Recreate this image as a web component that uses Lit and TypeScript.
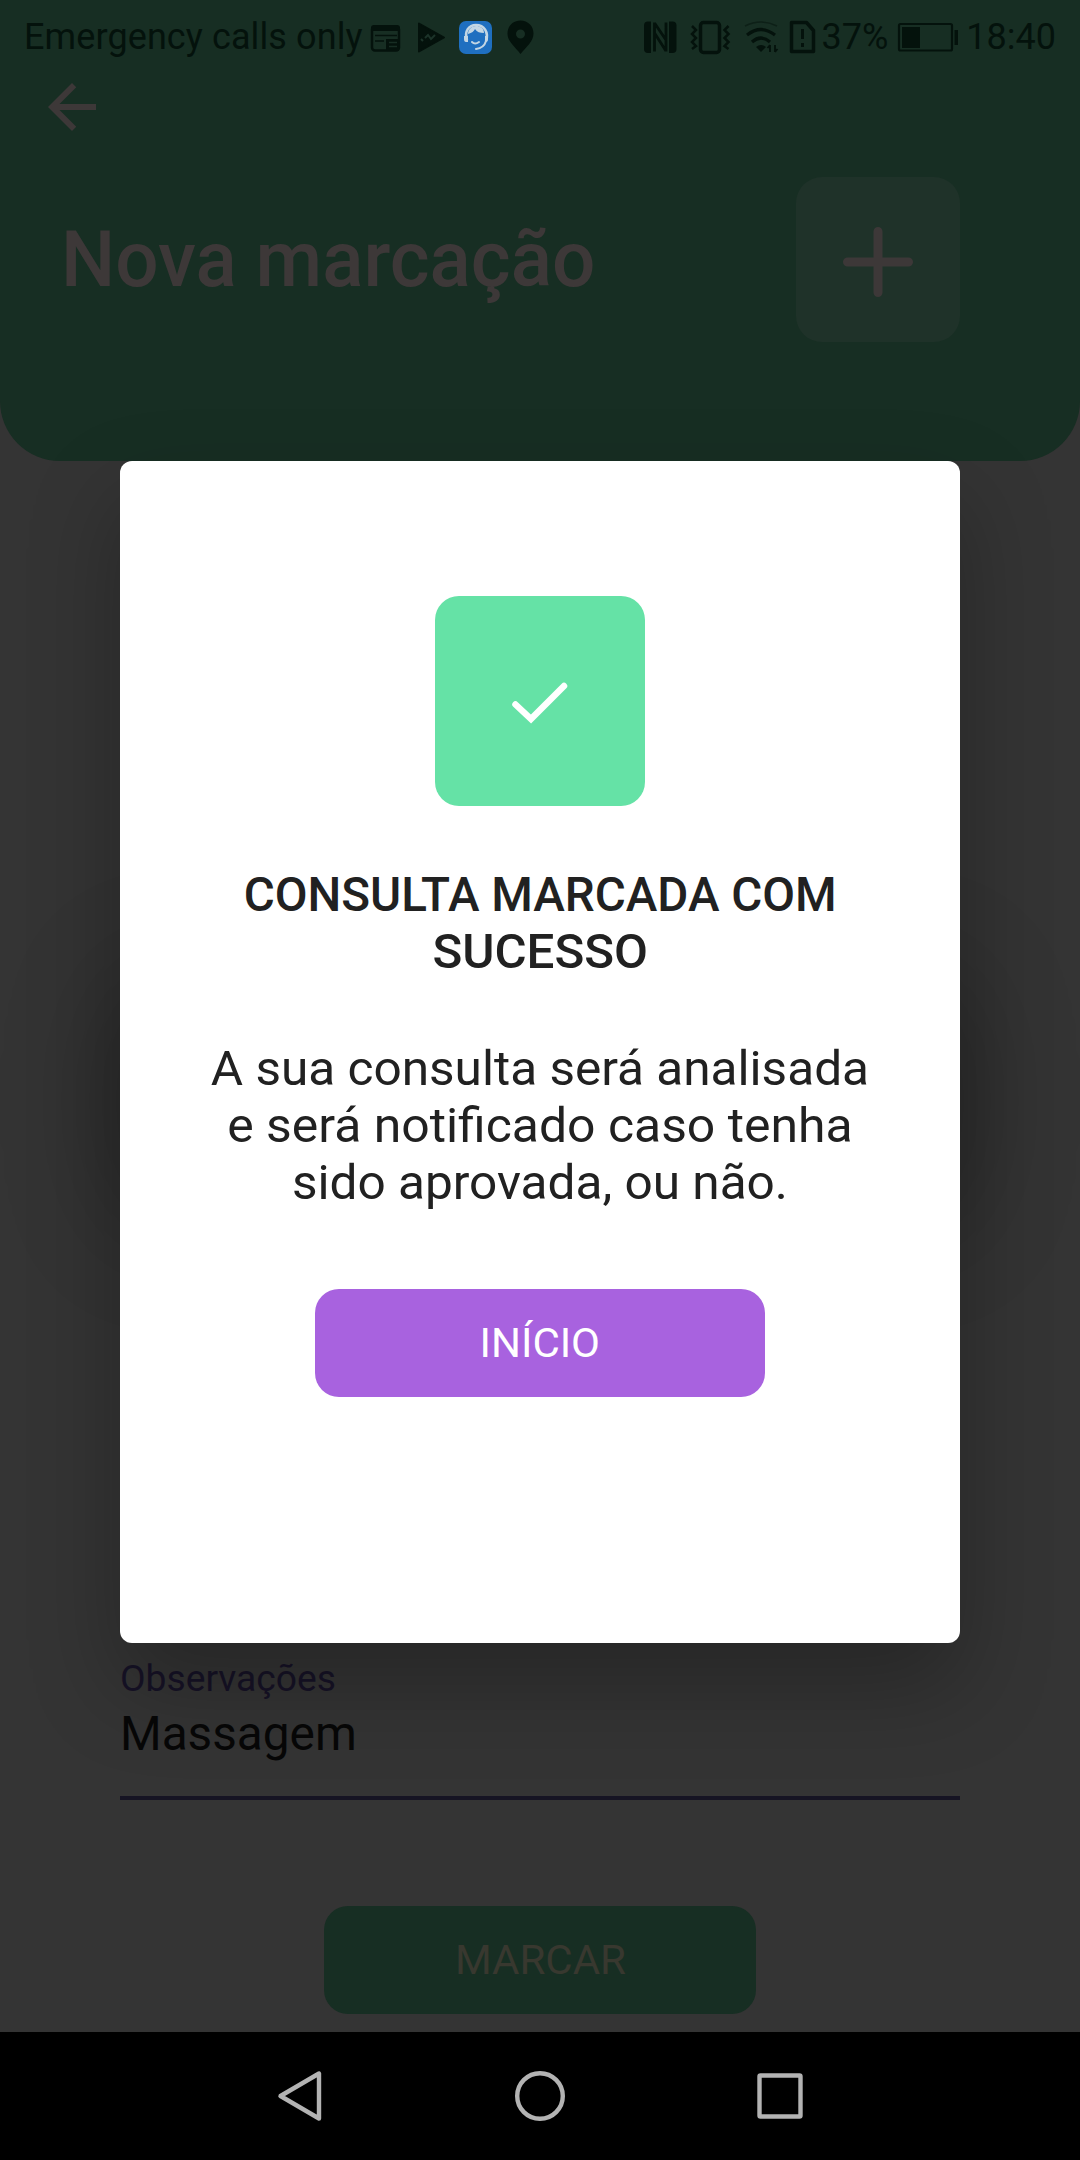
import { LitElement, html, css, svg } from "lit";
import { customElement } from "lit/decorators.js";

@customElement("status-bar")
class StatusBar extends LitElement {
  static styles = css`
    :host { display: flex; justify-content: space-between; align-items: center; height: 74px; padding: 0 24px 0 24px; box-sizing: border-box; font: 36px/42px Roboto, sans-serif; color: #04120c; }
    .side { display: flex; align-items: center; }
    .carrier, .pct, .clock { display: block; white-space: nowrap; }
    .carrier { letter-spacing: 0.1px; }
    .pct { margin-right: 2px; }
    svg { display: block; flex: none; }
  `;
  render() {
    return html`
      <div class="side">
        <span class="carrier">Emergency calls only</span>
        <svg class="tray" width="180" height="40" viewBox="363 16 180 40" fill="none">
          <rect x="372" y="25.500" width="27" height="24" rx="3" stroke="#04120c" stroke-width="2.500"/>
          <path d="M371 27q0-3 3-3h23q3 0 3 3v3h-29z" fill="#04120c"/>
          <path d="M375 34.500h22M375 40h9" stroke="#04120c" stroke-width="1.400"/>
          <path d="M386 38h13v12h-13z" fill="#04120c"/>
          <path d="M389 41.500h8M389 45.500h8" stroke="#172d23" stroke-width="1.400"/>
          <path d="M419 22.500l25 14-25 14z" fill="#04120c" stroke="#04120c" stroke-width="2" stroke-linejoin="round"/>
          <path d="M421 38l2 2M425 37l3-3 3 4 4-4" stroke="#1c3329" stroke-width="2"/>
          <rect x="459" y="20" width="33" height="33" rx="7" fill="#1f6fc0"/>
          <path d="M467 39c-3-9 2-15 9-15 8 0 13 7 10 16" stroke="#c3d6e4" stroke-width="2.600"/>
          <path d="M468 33c4-1 6-3 7-5 2 3 5 4 9 4 0-5-4-7-8-7s-8 3-8 8z" fill="#c3d6e4"/>
          <path d="M464 35h4v6h-2q-2 0-2-3zM485 35h3v3q0 3-3 3z" fill="#c3d6e4"/>
          <path d="M486 40q-2 7-10 8M472 41q3 3 7 0" stroke="#c3d6e4" stroke-width="2" stroke-linecap="round"/>
          <path fill-rule="evenodd" d="M520.500 19.500c-7.500 0-13 5.500-13 13 0 8 7 13 13 20.500 6-7.500 13-12.500 13-20.500 0-7.500-5.500-13-13-13zm0 9a4.500 4.500 0 1 1 0 9 4.500 4.500 0 0 1 0-9z" fill="#04120c"/>
        </svg>
      </div>
      <div class="side">
        <svg width="180" height="40" viewBox="640 16 180 40" fill="none" stroke="#04120c">
          <path d="M646 20.500h3v31.500h-3q-4 0-4-4v-23.500q0-4 4-4zM667 20.500h3.500q4 0 4 4v23.500q0 4-4 4h-3.500z" fill="#04120c" stroke="none"/>
          <path d="M652.500 21.500v29M664 21.500v29M652.500 22l11.500 17M652.500 32l11.500 18" stroke-width="2.800"/>
          <rect x="698.500" y="21.500" width="19" height="30" rx="3" stroke-width="3.500"/>
          <path d="M690 25l4 4-4 4 4 4-4 4 4 4-4 3M726.500 25l-4 4 4 4-4 4 4 4-4 4 4 3" stroke-width="2.500"/>
          <path d="M743 25q16-8 32 0" stroke-width="1.500" opacity=".5"/>
          <path d="M745 34q14-11 28 0M750 41q9-8 18 0" stroke-width="3.200"/>
          <path d="M754 46q5-4 10 0l-5 5z" fill="#04120c" stroke="none"/>
          <path d="M768 44v7M773 44v7M765.500 47l2.500-3M773 51l2.500-3" stroke-width="1.800"/>
          <path d="M789.500 21.500h15l7 8v21h-22z" stroke-width="3.500" stroke-linejoin="round"/>
          <path d="M800.500 28v10M800.500 42v4" stroke-width="3"/>
        </svg>
        <span class="pct">37%</span>
        <svg width="76" height="40" viewBox="888 16 76 40" fill="none">
          <rect x="897" y="23" width="53" height="26.500" rx="1.500" stroke="#04120c" stroke-width="2.200"/>
          <path d="M900 26h18v21h-18zM952.500 29h3.500v15h-3.500z" fill="#04120c"/>
        </svg>
        <span class="clock">18:40</span>
      </div>`;
  }
}

@customElement("nav-bar")
class NavBar extends LitElement {
  static styles = css`
    :host { display: flex; justify-content: center; align-items: center; gap: 180px; height: 128px; background: #000; }
    svg { display: block; }
  `;
  render() {
    const wrap = (shape: unknown) => html`<svg width="60" height="60" viewBox="0 0 60 60" fill="none" stroke="#b3b3b3" stroke-width="4.400" stroke-linejoin="round">${shape}</svg>`;
    return html`
      ${wrap(svg`<path d="M49 7.500v45L10.500 30z"/>`)}
      ${wrap(svg`<circle cx="30" cy="30" r="22.800"/>`)}
      ${wrap(svg`<rect x="9.500" y="9.500" width="41" height="41" rx="1"/>`)}`;
  }
}

@customElement("success-dialog")
class SuccessDialog extends LitElement {
  static styles = css`
    :host { display: block; width: 840px; height: 1182px; border-radius: 12px; box-shadow: 0 42px 90px rgba(0,0,0,.27); }
    .glow { position: absolute; left: 10px; right: 10px; top: 530px; height: 220px; border-radius: 40px; box-shadow: 0 0 110px 16px rgba(0,0,0,.27); }
    .card { position: relative; display: flex; flex-direction: column; align-items: center; height: 1182px; box-sizing: border-box; padding-top: 135px; border-radius: 12px; background: #fff; color: #212121; font: 48px/57px Roboto, sans-serif; text-align: center; }
    .tile { width: 210px; height: 210px; border-radius: 24px; background: #65e2a6; }
    .title { margin-top: 60px; font-weight: 500; }
    .message { margin-top: 60px; }
    .line { display: block; white-space: nowrap; }
    .title .line:first-child { transform: scaleX(.991); }
    .title .line:last-child { transform: scaleX(1.026); }
    .message .line { transform: scaleX(1.032); }
    .message .line:nth-child(2) { transform: scaleX(1.039); }
    .action { display: flex; align-items: center; justify-content: center; width: 450px; height: 108px; margin-top: 78px; border-radius: 24px; background: #a862df; color: #fff; font-size: 41px; }
    .action span { transform: scaleX(1.024); }
    svg { display: block; }
  `;
  render() {
    return html`
      <div class="glow"></div>
      <div class="card">
        <div class="tile">
          <svg width="210" height="210" viewBox="0 0 210 210" fill="none" stroke="#fff" stroke-width="6.500" stroke-linecap="round" stroke-linejoin="miter"><path d="M80.500 108.500l15.500 14.500 33-33"/></svg>
        </div>
        <div class="title"><span class="line">CONSULTA MARCADA COM</span><span class="line">SUCESSO</span></div>
        <div class="message"><span class="line">A sua consulta será analisada</span><span class="line">e será notificado caso tenha</span><span class="line">sido aprovada, ou não.</span></div>
        <div class="action"><span>INÍCIO</span></div>
      </div>`;
  }
}

@customElement("app-root")
class AppRoot extends LitElement {
  static styles = css`
    :host { display: block; width: 1080px; height: 2160px; font-family: Roboto, sans-serif; }
    .screen { position: relative; display: flex; flex-direction: column; height: 2160px; overflow: hidden; background: #343434; }
    .header { height: 461px; box-sizing: border-box; border-radius: 0 0 60px 60px; background: #172e23; }
    .back { display: block; margin: -3px 0 0 36px; }
    .hero { display: flex; justify-content: space-between; align-items: center; padding: 34px 120px 0 61px; }
    .heading { font-size: 78px; line-height: 92px; font-weight: 500; color: #3d3838; white-space: nowrap; transform: scaleX(.98); transform-origin: left; }
    .add { width: 164px; height: 165px; border-radius: 26px; background: #1f3229; }
    .add svg { display: block; }
    .form { flex: 1; display: flex; flex-direction: column; justify-content: flex-end; align-items: center; padding: 0 120px 18px; }
    .field { width: 840px; height: 138px; border-bottom: 4px solid #161423; }
    .label { display: block; font-size: 36px; line-height: 42px; color: #161226; transform: scaleX(1.033); transform-origin: left; }
    .value { display: block; margin: 5px 0 0; font-size: 48px; line-height: 57px; color: #070707; transform: scaleX(.994); transform-origin: left; }
    .submit { display: flex; align-items: center; justify-content: center; width: 432px; height: 108px; margin-top: 106px; border-radius: 24px; background: #172e23; color: #38382f; font-size: 41px; }
    .submit span { transform: scaleX(1.025); }
    .dialog { position: absolute; left: 120px; top: 461px; }
    nav-bar { position: relative; }
  `;
  render() {
    return html`
      <div class="screen">
        <div class="header">
          <status-bar></status-bar>
          <svg class="back" width="72" height="72" viewBox="0 0 24 24" fill="#3d3838"><path d="M20 11H7.830l5.590-5.590L12 4l-8 8 8 8 1.410-1.410L7.830 13H20v-2z"/></svg>
          <div class="hero">
            <div class="heading">Nova marcação</div>
            <div class="add"><svg width="164" height="165" viewBox="0 0 164 165" stroke="#3d3838" stroke-width="9" stroke-linecap="round"><path d="M82 54.500v61M51.500 85h61"/></svg></div>
          </div>
        </div>
        <div class="form">
          <div class="field"><span class="label">Observações</span><span class="value">Massagem</span></div>
          <div class="submit"><span>MARCAR</span></div>
        </div>
        <nav-bar></nav-bar>
        <success-dialog class="dialog"></success-dialog>
      </div>`;
  }
}
